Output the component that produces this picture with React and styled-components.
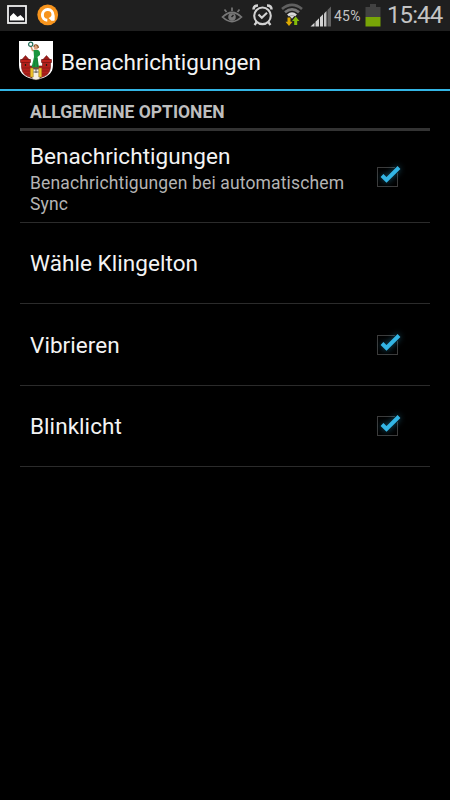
import React from 'react';
import styled, { createGlobalStyle } from 'styled-components';

const GlobalStyle = createGlobalStyle`
    body {
        margin: 0;
        background: #000;
        font-family: Roboto, sans-serif;
    }
`;

const options = [
    { title: 'Benachrichtigungen', summary: 'Benachrichtigungen bei automatischem Sync', checked: true, height: 92 },
    { title: 'Wähle Klingelton', height: 81 },
    { title: 'Vibrieren', checked: true, height: 82 },
    { title: 'Blinklicht', checked: true, height: 81 },
];

const App = () => {
    return (
        <Screen>
            <GlobalStyle />
            <StatusBar />
            <ActionBar>
                <CoatOfArms />
                <PageTitle>Benachrichtigungen</PageTitle>
            </ActionBar>
            <OptionList>
                <Category>ALLGEMEINE OPTIONEN</Category>
                {options.map((option) => (
                    <Option key={option.title} {...option} />
                ))}
            </OptionList>
        </Screen>
    );
}

export default App;

const Screen = styled.div`
    width: 450px;
    height: 800px;
    overflow: hidden;
    background: #000;
`;

const ActionBar = styled.header`
    display: flex;
    align-items: center;
    box-sizing: border-box;
    height: 60px;
    padding-left: 18px;
    border-bottom: 2px solid #33b5e5;
`;

const PageTitle = styled.h1`
    margin: 4px 0 0 7px;
    font-weight: 400;
    font-size: 22.5px;
    line-height: 28px;
    letter-spacing: 0.04px;
    color: #f3f3f3;
`;

const OptionList = styled.main`
    padding: 0 20px;
`;

const Category = styled.h2`
    box-sizing: border-box;
    height: 40px;
    margin: 0;
    padding: 10px 10px 0;
    border-bottom: 3px solid #333;
    font-weight: 700;
    font-size: 17.5px;
    line-height: 22px;
    color: #bebebe;
    white-space: nowrap;
`;

const Option = ({ title, summary, checked, height }) => {
    return (
        <OptionRow $height={height}>
            <OptionText>
                <OptionTitle $single={!summary}>{title}</OptionTitle>
                {summary && <Summary>{summary}</Summary>}
            </OptionText>
            {checked && <Checkbox />}
        </OptionRow>
    );
}

const OptionRow = styled.div`
    display: flex;
    align-items: center;
    justify-content: space-between;
    box-sizing: border-box;
    height: ${({ $height }) => $height}px;
    padding: 0 22px 0 10px;
    border-bottom: 1px solid #2b2b2b;
`;

const OptionText = styled.div`
    width: 326px;
`;

const OptionTitle = styled.div`
    padding-top: ${({ $single }) => ($single ? 1 : 2)}px;
    font-size: 22.5px;
    line-height: 27px;
    letter-spacing: 0.06px;
    color: #f3f3f3;
`;

const Summary = styled.div`
    padding-top: 3px;
    margin-bottom: -2px;
    font-size: 17.5px;
    line-height: 21px;
    letter-spacing: 0.14px;
    color: #b4b4b4;
`;

const Checkbox = () => {
    return (
        <CheckSvg viewBox="0 0 40 40">
            <rect x="9.5" y="10.5" width="20" height="19" fill="none" stroke="#3c3c3c" />
            <path d="M14 18.5 18.5 23 31 10.5" fill="none" stroke="#000" strokeWidth="6" />
            <path d="M14 18.5 18.5 23 31 10.5" fill="none" stroke="#33b5e5" strokeWidth="4" />
        </CheckSvg>
    );
}

const CheckSvg = styled.svg`
    flex: none;
    width: 40px;
    height: 40px;

    path:last-child {
        filter: drop-shadow(0 0 3px rgba(51, 181, 229, 0.5));
    }
`;

const StatusBar = () => {
    return (
        <StatusContainer>
            <StatusIcon $width={22} $left={6} viewBox="0 0 22 30">
                <rect x="2" y="6" width="18" height="17" fill="#1b1b1f" stroke="#eee" strokeWidth="1.8" />
                <path d="M4 20.5v-4l3.5-3.500 4 4 3-2 3.500 3.500v2z" fill="#fff" />
            </StatusIcon>
            <StatusIcon $width={22} $left={9} viewBox="0 0 22 30">
                <circle cx="10.7" cy="14.8" r="10.4" fill="#f7941d" />
                <path d="M10.3 20.200A5.300 5.300 0 1 1 16 15v5" fill="none" stroke="#fff" strokeWidth="3" />
                <path d="M11.500 18q1.800-.500 3-2.500h2.900v5.300h-3z" fill="#fff" />
            </StatusIcon>
            <Spacer />
            <StatusIcon $width={22} viewBox="0 0 22 30">
                <g fill="none" stroke="#777" strokeWidth="1.7">
                    <path d="M1.5 17Q11 8 20.5 17Q11 26 1.5 17z" />
                    <path d="M11 11V7.5M5.5 12 3.5 9.5M16.5 12l2-2.5" />
                </g>
                <circle cx="11" cy="17" r="3.8" fill="#777" />
                <path d="m10.5 17 2-2" stroke="#222" strokeWidth="1.5" />
            </StatusIcon>
            <StatusIcon $width={22} $left={9} viewBox="0 0 22 30">
                <g fill="none" stroke="#d2d2d2">
                    <circle cx="10.5" cy="15.8" r="8.3" strokeWidth="2.1" />
                    <path d="m6.5 14.5 3.3 3.3 5.2-5" strokeWidth="2.1" />
                    <path d="M1.5 9.5Q1.5 5.5 6 5.5M15 5.5Q19.5 5.5 19.5 9.5" strokeWidth="2.5" />
                    <path d="M4.8 22 2.5 25M16.2 22l2.3 3" strokeWidth="2.2" />
                </g>
            </StatusIcon>
            <StatusIcon $width={22} $left={7} viewBox="0 0 22 30">
                <g fill="none" strokeWidth="2.7">
                    <path d="M1 9Q11 .8 21 9" stroke="#606060" />
                    <path d="M4 12.3Q11 6.4 18 12.3" stroke="#777" />
                    <path d="M7 15.5Q11 11.7 15 15.5" stroke="#d8d8d8" />
                </g>
                <path d="m8 15.3 3 3.4 3-3.4z" fill="#d8d8d8" />
                <path d="M6.5 17.5h3v4.2h2L8 26l-3.5-4.3h2z" fill="#dda900" />
                <path d="M13.2 25v-4H11l3.7-4.5 3.7 4.5h-2.2v4z" fill="#85bd08" />
            </StatusIcon>
            <StatusIcon $width={22} $left={7} viewBox="0 0 22 30">
                <path d="M.5 26.5 4.5 22.7v3.8zM5.5 26.5v-4.8l3.5-3.5v8.3zM10 26.5v-9.3l3-3v12.3z" fill="#d2d2d2" />
                <path d="M14 26.5V13.6l2.5-2.5v15.4z" fill="#c2c2c2" />
                <path d="M17.5 26.5V10L21 6.5v20z" fill="#626262" />
            </StatusIcon>
            <Percent>45%</Percent>
            <StatusIcon $width={16} $left={3} viewBox="0 0 16 30">
                <path d="M.5 7H5V4h6v3h4.5v10H.5z" fill="#424242" />
                <path d="M.5 17h15v9.5H.5z" fill="#78a507" />
            </StatusIcon>
            <Clock>15:44</Clock>
        </StatusContainer>
    );
}

const StatusContainer = styled.div`
    display: flex;
    align-items: flex-start;
    box-sizing: border-box;
    height: 31px;
    padding-right: 7px;
    background: #1f1f1f;
`;

const StatusIcon = styled.svg`
    flex: none;
    width: ${({ $width }) => $width}px;
    height: 30px;
    margin-left: ${({ $left }) => $left || 0}px;
`;

const Spacer = styled.div`
    flex: 1;
`;

const Percent = styled.div`
    width: 28px;
    margin-left: 2px;
    font-size: 14px;
    line-height: 32px;
    letter-spacing: 0.2px;
    color: #c4c4c4;
`;

const Clock = styled.div`
    width: 56px;
    margin-left: 6px;
    font-size: 24px;
    line-height: 30px;
    letter-spacing: -0.9px;
    color: #c4c4c4;
    white-space: nowrap;
`;

const CoatOfArms = () => {
    return (
        <ArmsSvg viewBox="0 0 36 42">
            <path d="M1 1h34v24c0 8-5 11-10 13l-7 2-7-2C6 36 1 33 1 25z" fill="#fff" />
            {/* castle */}
            <path d="M3.5 20h8v6h13v-6h8v7c-.5 6-4 9-8 10l-6.5 2-6.5-2c-4-1-7.5-4-8-10z" fill="#b3201b" stroke="#641310" strokeWidth=".6" />
            <path d="m3.5 20 4-4.500 4 4.500zM24.500 20l4-4.500 4 4.500z" fill="#a01d19" stroke="#641310" strokeWidth=".5" />
            <path d="M2.5 19.5h10v3h-10zM23.5 19.5h10v3h-10z" fill="#c0221c" stroke="#641310" strokeWidth=".6" />
            <path d="M4 28h8M24 28h8M5 31h7M24 31h7M7 34h5M24 34h5" stroke="#7a1814" strokeWidth=".6" />
            <path d="M7.5 24v2M28.5 24v2" stroke="#221" strokeWidth="1.2" />
            <path d="M14 39V28.5h8V39l-4 1z" fill="#f5f0e4" stroke="#292216" strokeWidth=".5" />
            <path d="M12.3 28h3v9h-3zM20.7 28h3v9h-3z" fill="#edc32c" stroke="#806416" strokeWidth=".4" />
            <path d="M15.5 29h5M15.5 32h5M18 29v4" stroke="#444" strokeWidth=".8" />
            {/* maiden with wreath */}
            <path d="M13 6.5 14.5 10.5H17" fill="none" stroke="#cf9570" strokeWidth="1.5" />
            <path d="M15.500 10h4.500q2.500 1 2 5l-2.500 2 1.500 10.500h-7.500L16 17z" fill="#1a963e" />
            <path d="m17.5 18-1.500 9M19 18l.5 9" stroke="#0f6c2d" strokeWidth=".6" />
            <circle cx="18" cy="7.5" r="2.2" fill="#daa17d" />
            <path d="M16 7q0-2.500 2.200-2.200T20.300 8" fill="none" stroke="#8a501f" strokeWidth="1.2" />
            <circle cx="12.7" cy="4.3" r="2.1" fill="#fff" stroke="#246d58" strokeWidth="1.2" />
        </ArmsSvg>
    );
}

const ArmsSvg = styled.svg`
    flex: none;
    width: 36px;
    height: 42px;
    margin-top: 2px;
`;
